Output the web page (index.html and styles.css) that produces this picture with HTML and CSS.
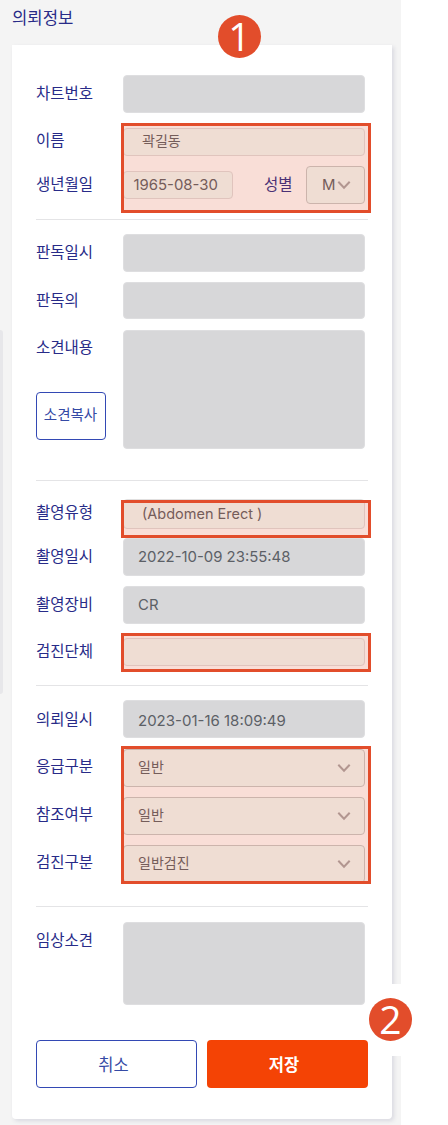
FILE: index.html
```html
<!DOCTYPE html>
<html lang="ko">
<head>
<meta charset="utf-8">
<title>의뢰정보</title>
<link rel="stylesheet" href="styles.css">
</head>
<body>
<main class="panel">
  <h1 class="title">의뢰정보</h1>
  <form class="card">
    <section class="section patient">
      <div class="row"><span class="label">차트번호</span><div class="field"></div></div>
      <div class="row"><span class="label name-label">이름</span><div class="field edit name">곽길동</div></div>
      <div class="row"><span class="label">생년월일</span><div class="field edit latin birth">1965-08-30</div><span class="label gender">성별</span><div class="field select latin sex"><span>M</span><svg class="chevron" viewBox="0 0 14 10"><path d="M1.3 1.8 7 7.8 12.7 1.8"/></svg></div></div>
    </section>
    <section class="section reading">
      <div class="row"><span class="label">판독일시</span><div class="field"></div></div>
      <div class="row"><span class="label">판독의</span><div class="field short"></div></div>
      <div class="row"><div class="side"><span class="label">소견내용</span><button type="button" class="btn copy">소견복사</button></div><div class="field opinion"></div></div>
    </section>
    <section class="section exam">
      <div class="row"><span class="label type-label">촬영유형</span><div class="field edit type">(Abdomen Erect )</div></div>
      <div class="row"><span class="label">촬영일시</span><div class="field latin">2022-10-09 23:55:48</div></div>
      <div class="row"><span class="label">촬영장비</span><div class="field latin">CR</div></div>
      <div class="row"><span class="label">검진단체</span><div class="field edit"></div></div>
    </section>
    <section class="section request">
      <div class="row"><span class="label received-label">의뢰일시</span><div class="field latin received">2023-01-16 18:09:49</div></div>
      <div class="row"><span class="label">응급구분</span><div class="field select"><span>일반</span><svg class="chevron" viewBox="0 0 14 10"><path d="M1.3 1.8 7 7.8 12.7 1.8"/></svg></div></div>
      <div class="row"><span class="label">참조여부</span><div class="field select"><span>일반</span><svg class="chevron" viewBox="0 0 14 10"><path d="M1.3 1.8 7 7.8 12.7 1.8"/></svg></div></div>
      <div class="row"><span class="label">검진구분</span><div class="field select"><span>일반검진</span><svg class="chevron" viewBox="0 0 14 10"><path d="M1.3 1.8 7 7.8 12.7 1.8"/></svg></div></div>
    </section>
    <section class="section clinical">
      <div class="row"><span class="label">임상소견</span><div class="field note"></div></div>
    </section>
    <div class="actions">
      <button type="button" class="btn">취소</button>
      <button type="button" class="btn save">저장</button>
    </div>
  </form>
  <i class="edge"></i>
  <i class="mark mark-patient"></i>
  <i class="mark mark-type"></i>
  <i class="mark mark-group"></i>
  <i class="mark mark-selects"></i>
  <i class="backdrop"></i>
  <b class="step step-one">1</b>
  <b class="step step-two">2</b>
</main>
</body>
</html>
```
FILE: styles.css
```css
* { box-sizing: border-box; }

body {
  margin: 0;
  background: #fff;
  font-family: Inter, "Noto Sans CJK KR", sans-serif;
  font-size: 14px;
  color: #5c6066;
}

.panel {
  position: relative;
  width: 401px;
  height: 1125px;
  padding: 0 9px 0 12px;
  background: #f4f4f4;
}

.title {
  height: 45px;
  margin: 0;
  font-size: 16.7px;
  line-height: 36px;
  font-weight: 400;
  color: #282b88;
}

.card {
  width: 380px;
  height: 1073.5px;
  padding: 30px 24px 0;
  background: #fff;
  border-radius: 0 0 4px 4px;
  box-shadow: 2px 2px 4px rgba(40, 40, 90, .13);
}

.section {
  display: grid;
  border-bottom: 1px solid #e4e4e6;
}
.patient { grid-template-rows: 48px 43px 38px; padding-bottom: 15px; }
.reading { grid-template-rows: 48.5px 47.5px 119px; padding: 13.5px 0 31.5px; }
.exam { grid-template-rows: 43px 48px 47px 38px; padding: 14px 0 13.5px; }
.request { grid-template-rows: 49px 48px 48px 38px; padding: 14.5px 0 23px; }
.clinical { padding-top: 15px; border: 0; }

.row {
  display: flex;
  align-items: flex-start;
}

.label {
  flex: none;
  width: 87px;
  height: 38px;
  font-size: 15.5px;
  line-height: 37px;
  color: #282b88;
}
.type-label, .name-label, .request .label { line-height: 35px; }
.request .received-label { line-height: 39px; }
.gender { width: 42px; margin-left: 31px; }

.side {
  display: flex;
  flex-direction: column;
  width: 87px;
}
.side .label { line-height: 36px; }

.field {
  display: flex;
  align-items: center;
  flex: none;
  width: 242px;
  height: 38px;
  padding: 0 13px 0 14px;
  border: 1px solid #dedee0;
  border-radius: 4px;
  background: #d7d7d9;
}
.latin { font-size: 14.9px; }
.received { font-size: 15px; padding-top: 2px; }
.short { height: 37px; }
.opinion { height: 119px; }
.note { height: 83px; }

.edit {
  height: 28px;
  margin-top: 5px;
  padding-left: 18px;
  padding-bottom: 4px;
  border-color: #e0dfdf;
  background: #f3fefb;
}
.edit.birth { width: 110px; padding-left: 9.5px; padding-bottom: 0; }
.edit.type { height: 30px; margin-top: 4px; padding-bottom: 2px; font-size: 14.5px; }

.select {
  justify-content: space-between;
  border-color: #c8cccb;
  background: #f3fefb;
}
.select > span { padding-bottom: 5px; }
.sex { width: 59px; padding: 0 13px 0 15px; }
.sex > span { padding: 0; }

.chevron {
  flex: none;
  width: 14px;
  height: 10px;
  fill: none;
  stroke: #a8a7a8;
  stroke-width: 2;
}

.btn {
  height: 48px;
  padding: 0 6px 0 0;
  border: 1.5px solid #3349b4;
  border-radius: 4px;
  background: #fff;
  font-family: inherit;
  font-size: 16.5px;
  color: #354aa5;
}
.copy {
  width: 70px;
  margin-top: 24px;
  padding: 0 1px 4px 0;
  font-size: 14.5px;
}
.save {
  padding-right: 7px;
  border: 0;
  background: #f44305;
  color: #fff;
  font-weight: 700;
}

.actions {
  display: grid;
  grid-template-columns: 161px 161px;
  gap: 10px;
  margin-top: 35px;
}

/* Annotation layer over the form */
.mark {
  position: absolute;
  left: 121px;
  width: 250px;
  border: 3px solid #e24d2b;
  background: rgba(225, 78, 42, .19);
}
.mark-patient { top: 123px; height: 90px; }
.mark-type { top: 500px; height: 38px; }
.mark-group { top: 633px; height: 39px; }
.mark-selects { top: 746px; height: 138px; }

.edge {
  position: absolute;
  left: 0;
  top: 330px;
  width: 3px;
  height: 364px;
  border-radius: 0 3px 3px 0;
  background: #e7e7ea;
}

.backdrop {
  position: absolute;
  left: 392px;
  top: 984px;
  width: 56px;
  height: 72px;
  background: #fff;
}

.step {
  position: absolute;
  width: 43px;
  height: 43px;
  border-radius: 50%;
  background: #e24d2b;
  color: #fff;
  font: 400 39px/42px "Open Sans", sans-serif;
  text-align: center;
}
.step-one { left: 218px; top: 15px; }
.step-two { left: 369px; top: 998px; }
```
